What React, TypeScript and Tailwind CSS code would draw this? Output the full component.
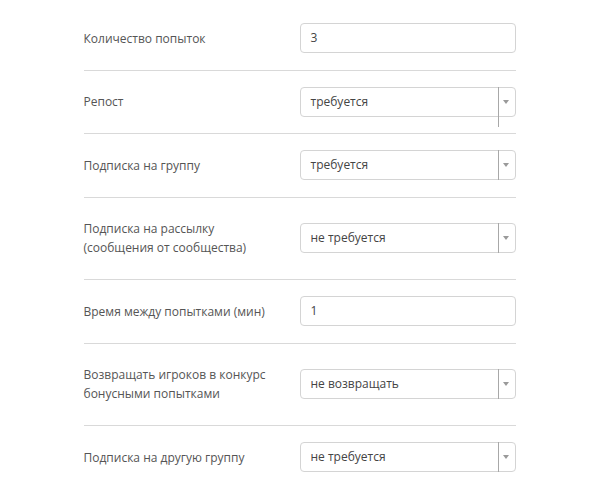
import React from 'react'

type Row = {
  label: string[]
  value: string
  kind: 'input' | 'select'
  longLine?: boolean
}

const rows: Row[] = [
  { label: ['Количество попыток'], value: '3', kind: 'input' },
  { label: ['Репост'], value: 'требуется', kind: 'select', longLine: true },
  { label: ['Подписка на группу'], value: 'требуется', kind: 'select' },
  { label: ['Подписка на рассылку', '(сообщения от сообщества)'], value: 'не требуется', kind: 'select' },
  { label: ['Время между попытками (мин)'], value: '1', kind: 'input' },
  { label: ['Возвращать игроков в конкурс', 'бонусными попытками'], value: 'не возвращать', kind: 'select' },
  { label: ['Подписка на другую группу'], value: 'не требуется', kind: 'select' },
]

const Field: React.FC<{ row: Row }> = ({ row }) => {
  if (row.kind === 'input') {
    return (
      <div className="h-[30px] w-full rounded-[4px] border border-[#d4d4d4] bg-white px-[10px] flex items-center text-[12px] text-[#444]">
        {row.value}
      </div>
    )
  }
  return (
    <div className="relative h-[30px] w-full rounded-[4px] border border-[#d4d4d4] bg-white flex items-center text-[12px] text-[#444]">
      <span className="flex-1 pl-[10px]">{row.value}</span>
      <span className={`absolute right-[16px] top-[-1px] w-px bg-[#a8a8a8] ${row.longLine ? 'h-[40px]' : 'h-[30px]'}`} />
      <span className="w-[16px] flex justify-center pr-[1px]">
        <span className="block w-0 h-0 border-l-[3px] border-r-[3px] border-t-[4px] border-l-transparent border-r-transparent border-t-[#9a9a9a]" />
      </span>
    </div>
  )
}

export default function App() {
  return (
    <div className="w-full bg-white pt-[7px]" style={{ fontFamily: '"Open Sans", "Noto Sans", sans-serif' }}>
      <div className="mx-auto w-[432px]">
        {rows.map((row, i) => (
          <div
            key={i}
            className={`flex items-center py-4 ${i < rows.length - 1 ? 'border-b border-[#d9d9d9]' : ''}`}
          >
            <div className="w-1/2 py-[5.75px] text-[12px] leading-[19px] text-[#555]">
              {row.label.map((l, j) => (
                <div key={j}>{l}</div>
              ))}
            </div>
            <div className="w-1/2">
              <Field row={row} />
            </div>
          </div>
        ))}
      </div>
    </div>
  )
}
